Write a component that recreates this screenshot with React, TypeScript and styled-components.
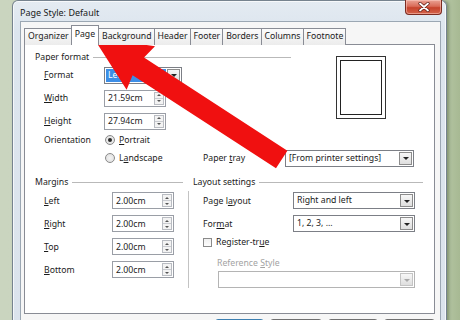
import React from 'react';
import styled, { createGlobalStyle, css } from 'styled-components';

const GlobalStyle = createGlobalStyle`
  html, body {
    margin: 0;
    padding: 0;
  }
  body {
    width: 460px;
    height: 320px;
    overflow: hidden;
    font-family: "Noto Sans", "Open Sans", sans-serif;
    font-size: 8.7px;
    color: #1b1b1b;
  }
`;

const Desktop = styled.div`
  position: relative;
  width: 460px;
  height: 320px;
  overflow: hidden;
  box-sizing: border-box;
  padding-left: 12px;
  background: linear-gradient(90deg, #cad5bf 0, #c8d4bc 440px, #b2c3a0 448px, #a7b993 460px);
`;

const Window = styled.div`
  width: 435px;
  height: 350px;
  box-sizing: border-box;
  display: flex;
  flex-direction: column;
  padding: 0 5px 0 7px;
  background: linear-gradient(180deg, #e4ebf2 0, #dce5ee 30px, #dbe3ec 100%);
  border: 1px solid #76838f;
  border-bottom: none;
  border-radius: 6px 6px 0 0;
  box-shadow: inset 0 0 0 1px rgba(255, 255, 255, 0.7), 2px 0 3px rgba(40, 60, 30, 0.35);
`;

const TitleBar = styled.div`
  height: 20px;
  display: flex;
  justify-content: space-between;
  align-items: flex-start;
  flex-shrink: 0;
`;

const Title = styled.span`
  padding-top: 5px;
  font-size: 9px;
  line-height: 13px;
  color: #1a1a1a;
`;

const CloseButton = styled.div`
  width: 37px;
  height: 15px;
  margin: -1px -1px 0 0;
  box-sizing: border-box;
  display: flex;
  align-items: center;
  justify-content: center;
  border: 1px solid #7b2b20;
  border-top: none;
  border-radius: 0 0 4px 4px;
  background: linear-gradient(180deg, #eaa295 0, #d96b58 45%, #c6422c 55%, #d4644b 100%);
  box-shadow: inset 0 0 0 1px rgba(255, 210, 200, 0.5);
`;

const Client = styled.div`
  flex: 1;
  display: flex;
  flex-direction: column;
  padding: 3px 5px 0 3px;
  background: #f6f6f6;
  border: 1px solid #9ba7b3;
  border-bottom: none;
`;

const TabStrip = styled.div`
  display: flex;
  align-items: flex-end;
  height: 20px;
  margin-bottom: -1px;
  position: relative;
  z-index: 1;
`;

const Tab = styled.div<{ $active?: boolean }>`
  height: 17px;
  box-sizing: border-box;
  padding: 0 2px 0 3px;
  line-height: 15px;
  border: 1px solid #898c95;
  border-bottom: none;
  margin-right: -1px;
  background: linear-gradient(180deg, #fbfbfb 0, #ececec 100%);
  color: #1b1b1b;
  white-space: nowrap;

  ${p => p.$active && css`
    height: 20px;
    padding: 0 3px 0 3px;
    line-height: 17px;
    background: #fff;
    position: relative;
    z-index: 2;
  `}
`;

const Panel = styled.div`
  height: 270px;
  width: 411px;
  box-sizing: border-box;
  border: 1px solid #898c95;
  background: #fff;
  padding: 6px 0 0 10px;
`;

const SectionHeader = styled.div<{ $width: number }>`
  width: ${p => p.$width}px;
  height: 12px;
  display: flex;
  align-items: center;
  gap: 4px;
  line-height: 12px;
  white-space: nowrap;

  &::after {
    content: '';
    flex: 1;
    height: 1px;
    background: #b9b9b9;
  }
`;

const PaperGrid = styled.div`
  display: grid;
  grid-template-columns: 60px 99px 82px 129px;
  grid-template-rows: 22px 24px 22px 16px 20px;
  align-items: center;
  margin-top: 1px;
  padding-left: 9px;
`;

const Label = styled.span<{ $disabled?: boolean }>`
  line-height: 12px;
  white-space: nowrap;
  color: ${p => (p.$disabled ? '#a3a3a3' : '#1b1b1b')};
`;

const Key = styled.span`
  text-decoration: underline;
  text-underline-offset: 1px;
`;

const SpinBox = styled.div`
  width: 62px;
  height: 17px;
  box-sizing: border-box;
  display: flex;
  align-items: center;
  justify-content: space-between;
  padding: 0 1px 0 3px;
  border: 1px solid #9a9ea6;
  background: #fff;
`;

const SpinButtons = styled.div`
  width: 10px;
  height: 13px;
  box-sizing: border-box;
  display: flex;
  flex-direction: column;
  border: 1px solid #b9bcc2;
  background: #f3f3f3;
`;

const SpinHalf = styled.div<{ $down?: boolean }>`
  flex: 1;
  display: flex;
  align-items: center;
  justify-content: center;
  border-top: ${p => (p.$down ? '1px solid #c9cbd0' : 'none')};

  &::before {
    content: '';
    border-left: 2px solid transparent;
    border-right: 2px solid transparent;
    ${p => (p.$down ? 'border-top: 2px solid #555;' : 'border-bottom: 2px solid #555;')}
  }
`;

const Combo = styled.div<{ $width: number; $disabled?: boolean }>`
  width: ${p => p.$width}px;
  height: 17px;
  box-sizing: border-box;
  display: flex;
  align-items: center;
  justify-content: space-between;
  padding: 0 1px 0 3px;
  border: 1px solid ${p => (p.$disabled ? '#b4b4b4' : '#7c7f86')};
  background: #fff;
  white-space: nowrap;
`;

const ComboText = styled.span<{ $selected?: boolean }>`
  flex: 1;
  line-height: 13px;
  margin-left: -2px;
  padding-left: 2px;
  ${p => p.$selected && css`
    background: #3d8ee6;
    color: #fff;
    margin-right: 1px;
  `}
`;

const DropButton = styled.div<{ $disabled?: boolean }>`
  width: 13px;
  height: 13px;
  box-sizing: border-box;
  display: flex;
  align-items: center;
  justify-content: center;
  border: 1px solid ${p => (p.$disabled ? '#c4c4c4' : '#8c8c8c')};
  background: linear-gradient(180deg, #f7f7f7 0, #dedede 100%);

  &::before {
    content: '';
    border-left: 3px solid transparent;
    border-right: 3px solid transparent;
    border-top: 3px solid ${p => (p.$disabled ? '#a8a8a8' : '#222')};
    margin-top: 1px;
  }
`;

const Preview = styled.div`
  grid-column: 3 / 5;
  grid-row: 1 / 4;
  align-self: start;
  margin: -8px 0 0 133px;
  width: 50px;
  height: 63px;
  box-sizing: border-box;
  padding: 3px;
  border: 1px solid #333;
  background: #fff;
`;

const PreviewPage = styled.div`
  width: 100%;
  height: 100%;
  box-sizing: border-box;
  border: 1px solid #222;
`;

const RadioRow = styled.label`
  display: flex;
  align-items: center;
  gap: 4px;
  margin-left: 1px;
  line-height: 12px;
`;

const Radio = styled.span<{ $checked?: boolean }>`
  width: 10px;
  height: 10px;
  box-sizing: border-box;
  border-radius: 50%;
  border: 1px solid #8a8a8a;
  background: radial-gradient(circle, #f3f3f3 0, #dcdcdc 100%);
  display: flex;
  align-items: center;
  justify-content: center;

  &::after {
    content: '';
    width: 4px;
    height: 4px;
    border-radius: 50%;
    background: ${p => (p.$checked ? '#2a2a2a' : 'transparent')};
  }
`;

const BottomRow = styled.div`
  display: flex;
  margin-top: 8px;
`;

const MarginsCol = styled.div`
  width: 148px;
`;

const FieldGrid = styled.div<{ $cols: string; $indent: number }>`
  display: grid;
  grid-template-columns: ${p => p.$cols};
  grid-auto-rows: 23px;
  align-items: center;
  margin-top: 1px;
  padding-left: ${p => p.$indent}px;
`;

const Separator = styled.div`
  width: 1px;
  height: 97px;
  margin: 15px 0 0 5px;
  background: #c3c3c3;
`;

const LayoutCol = styled.div`
  width: 230px;
  margin-left: 4px;
`;

const CheckRow = styled.label`
  height: 14px;
  display: flex;
  align-items: center;
  gap: 4px;
  padding-left: 10px;
  line-height: 12px;
`;

const CheckBox = styled.span`
  width: 9px;
  height: 9px;
  box-sizing: border-box;
  border: 1px solid #8a8a8a;
  background: linear-gradient(180deg, #f0f0f0, #fdfdfd);
`;

const RefLabel = styled.div`
  margin: 8px 0 0 24px;
  height: 12px;
`;

const RefCombo = styled.div`
  margin: 2px 0 0 25px;
`;

const ButtonRow = styled.div`
  display: flex;
  gap: 6px;
  margin-top: 5px;
  padding-left: 191px;
`;

const DialogButton = styled.div<{ $width: number; $default?: boolean }>`
  width: ${p => p.$width}px;
  height: 22px;
  box-sizing: border-box;
  border: 1px solid ${p => (p.$default ? '#3c7fb1' : '#707070')};
  border-radius: 3px;
  background: linear-gradient(180deg, #f2f2f2 0, #ebebeb 50%, #dddddd 51%, #cfcfcf 100%);
  box-shadow: inset 0 0 0 1px ${p => (p.$default ? '#9ed2f2' : '#fbfbfb')};
`;

const Overlay = styled.svg`
  position: absolute;
  inset: 0;
  pointer-events: none;
`;

const Spin: React.FC<{ value: string }> = ({ value }) => (
  <SpinBox>
    <span>{value}</span>
    <SpinButtons>
      <SpinHalf />
      <SpinHalf $down />
    </SpinButtons>
  </SpinBox>
);

const Select: React.FC<{ width: number; value?: string; selected?: boolean; disabled?: boolean }> = ({
  width,
  value = '',
  selected,
  disabled,
}) => (
  <Combo $width={width} $disabled={disabled}>
    <ComboText $selected={selected}>{value}</ComboText>
    <DropButton $disabled={disabled} />
  </Combo>
);

// red arrow pointing at the "Page" tab
const arrowPoints = (() => {
  const ang = (33 * Math.PI) / 180;
  const dx = Math.cos(ang);
  const dy = Math.sin(ang);
  const pt = (a: number, b: number) =>
    `${(93 + a * dx - b * dy).toFixed(1)},${(37 + a * dy + b * dx).toFixed(1)}`;
  return [pt(0, 0), pt(57, -26), pt(54, -10.5), pt(225, -10.5), pt(225, 10.5), pt(54, 10.5), pt(57, 26)].join(' ');
})();

const tabs = ['Organizer', 'Page', 'Background', 'Header', 'Footer', 'Borders', 'Columns', 'Footnote'];

const margins = [
  { key: 'L', rest: 'eft' },
  { key: 'R', rest: 'ight' },
  { key: 'T', rest: 'op' },
  { key: 'B', rest: 'ottom' },
];

const buttons = [
  { label: 'OK', width: 50, isDefault: true },
  { label: 'Cancel', width: 52 },
  { label: 'Help', width: 51 },
  { label: 'Reset', width: 52 },
];

const App: React.FC = () => (
  <>
    <GlobalStyle />
    <Desktop>
      <Window>
        <TitleBar>
          <Title>Page Style: Default</Title>
          <CloseButton>
            <svg width="12" height="10" viewBox="0 0 12 10">
              <path d="M2 1.5 L10 8.5 M10 1.5 L2 8.5" stroke="#5a1a12" strokeWidth="3.2" strokeLinecap="round" />
              <path d="M2 1.5 L10 8.5 M10 1.5 L2 8.5" stroke="#fff" strokeWidth="1.8" strokeLinecap="round" />
            </svg>
          </CloseButton>
        </TitleBar>
        <Client>
          <TabStrip>
            {tabs.map(t => (
              <Tab key={t} $active={t === 'Page'}>
                {t}
              </Tab>
            ))}
          </TabStrip>
          <Panel>
            <SectionHeader $width={256}>Paper format</SectionHeader>
            <PaperGrid>
              <Label><Key>F</Key>ormat</Label>
              <Select width={78} value="Letter" selected />
              <Preview>
                <PreviewPage />
              </Preview>

              <Label><Key>W</Key>idth</Label>
              <Spin value="21.59cm" />

              <Label><Key>H</Key>eight</Label>
              <Spin value="27.94cm" />

              <Label>Orientation</Label>
              <RadioRow>
                <Radio $checked />
                <span><Key>P</Key>ortrait</span>
              </RadioRow>
              <span />
              <span />

              <span />
              <RadioRow>
                <Radio />
                <span>L<Key>a</Key>ndscape</span>
              </RadioRow>
              <Label>Paper <Key>t</Key>ray</Label>
              <Select width={129} value="[From printer settings]" />
            </PaperGrid>

            <BottomRow>
              <MarginsCol>
                <SectionHeader $width={148}>Margins</SectionHeader>
                <FieldGrid $cols="68px 62px" $indent={9}>
                  {margins.map(m => (
                    <React.Fragment key={m.key}>
                      <Label><Key>{m.key}</Key>{m.rest}</Label>
                      <Spin value="2.00cm" />
                    </React.Fragment>
                  ))}
                </FieldGrid>
              </MarginsCol>
              <Separator />
              <LayoutCol>
                <SectionHeader $width={230}>Layout settings</SectionHeader>
                <FieldGrid $cols="90px 122px" $indent={10}>
                  <Label>Page l<Key>a</Key>yout</Label>
                  <Select width={122} value="Right and left" />
                  <Label>For<Key>m</Key>at</Label>
                  <Select width={122} value="1, 2, 3, ..." />
                </FieldGrid>
                <CheckRow>
                  <CheckBox />
                  <span>Register-tr<Key>u</Key>e</span>
                </CheckRow>
                <RefLabel>
                  <Label $disabled>Reference <Key>S</Key>tyle</Label>
                </RefLabel>
                <RefCombo>
                  <Select width={197} disabled />
                </RefCombo>
              </LayoutCol>
            </BottomRow>
          </Panel>
          <ButtonRow>
            {buttons.map(b => (
              <DialogButton key={b.label} aria-label={b.label} $width={b.width} $default={b.isDefault} />
            ))}
          </ButtonRow>
        </Client>
      </Window>
      <Overlay width="460" height="320" viewBox="0 0 460 320">
        <polygon points={arrowPoints} fill="#f01010" />
      </Overlay>
    </Desktop>
  </>
);

export default App;
